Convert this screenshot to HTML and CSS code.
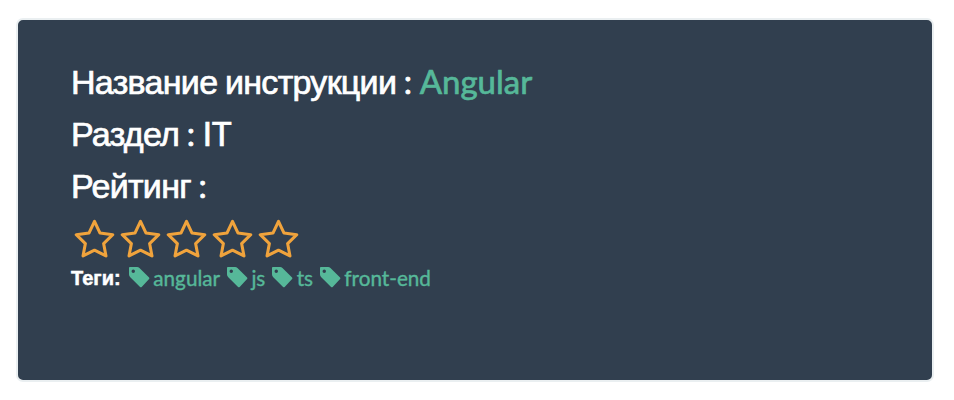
FILE: index.html
```html
<!DOCTYPE html>
<html lang="ru">
<head>
<meta charset="utf-8">
<title>Angular</title>
<link rel="stylesheet" href="styles.css">
</head>
<body>
<svg width="0" height="0" class="defs">
<symbol id="star" viewBox="0 0 40 40"><path d="M20 3.2 L25.4 14.7 L37.8 16.3 L28.9 24.9 L31.2 37 L20 31.4 L8.8 37 L11.1 24.9 L2.2 16.3 L14.6 14.7 Z"/></symbol>
<symbol id="tag" viewBox="0 0 22 22"><path fill-rule="evenodd" d="M1 1.8Q1 1 1.8 1H9Q10.3 1 11.3 2L20.8 11.4Q21.5 12.1 20.8 12.9L13.5 20.6Q12.7 21.4 11.9 20.6L2 10.8Q1 9.8 1 8.5ZM5.2 3.4A1.7 1.7 0 1 0 5.2 6.8A1.7 1.7 0 1 0 5.2 3.4Z"/></symbol>
</svg>
<main class="card">
<h2 class="title"><span class="word">Название</span> <span class="word">инструкции</span> : <a class="link">Angular</a></h2>
<h2 class="section"><span class="word">Раздел</span> : IT</h2>
<h2 class="rating"><span class="word">Рейтинг</span> :</h2>
<div class="stars">
<svg><use href="#star"/></svg><svg><use href="#star"/></svg><svg><use href="#star"/></svg><svg><use href="#star"/></svg><svg><use href="#star"/></svg>
</div>
<div class="tags">
<b class="label">Теги:</b>
<a class="tag"><svg><use href="#tag"/></svg>angular</a>
<a class="tag"><svg><use href="#tag"/></svg>js</a>
<a class="tag"><svg><use href="#tag"/></svg>ts</a>
<a class="tag"><svg><use href="#tag"/></svg>front-end</a>
</div>
</main>
</body>
</html>
```
FILE: styles.css
```css
* { box-sizing: border-box; }
body { margin: 0; padding: 18px 0 0 16px; background: #fff; font-family: Lato, sans-serif; }
.defs { display: block; height: 0; }
.card { width: 918px; height: 364px; padding: 35px 53px; border: 2px solid #eaeff1; border-radius: 7px; background: #313f4f; color: #fff; }
h2 { margin: 0; height: 52px; line-height: 52px; font-size: 33px; font-weight: 400; white-space: nowrap; word-spacing: -0.8px; -webkit-text-stroke: 0.7px currentColor; }
.word { font-family: "Liberation Sans", sans-serif; font-size: 34px; letter-spacing: -0.7px; }
.link { color: #56b899; }
.stars { display: flex; gap: 5.2px; height: 55px; padding: 7px 2.5px; }
.stars svg { width: 41px; height: 41px; fill: none; stroke: #f0a33c; stroke-width: 3; stroke-linejoin: round; }
.tags { display: flex; gap: 6px; height: 26px; line-height: 24px; font-size: 20.7px; white-space: nowrap; }
.label { width: 51px; font-family: "Liberation Sans", sans-serif; font-size: 20px; -webkit-text-stroke: 0.5px currentColor; }
.tag { display: flex; gap: 3px; color: #56b899; -webkit-text-stroke: 0.4px currentColor; }
.tag svg { width: 22.3px; height: 22.3px; fill: currentColor; }
```
